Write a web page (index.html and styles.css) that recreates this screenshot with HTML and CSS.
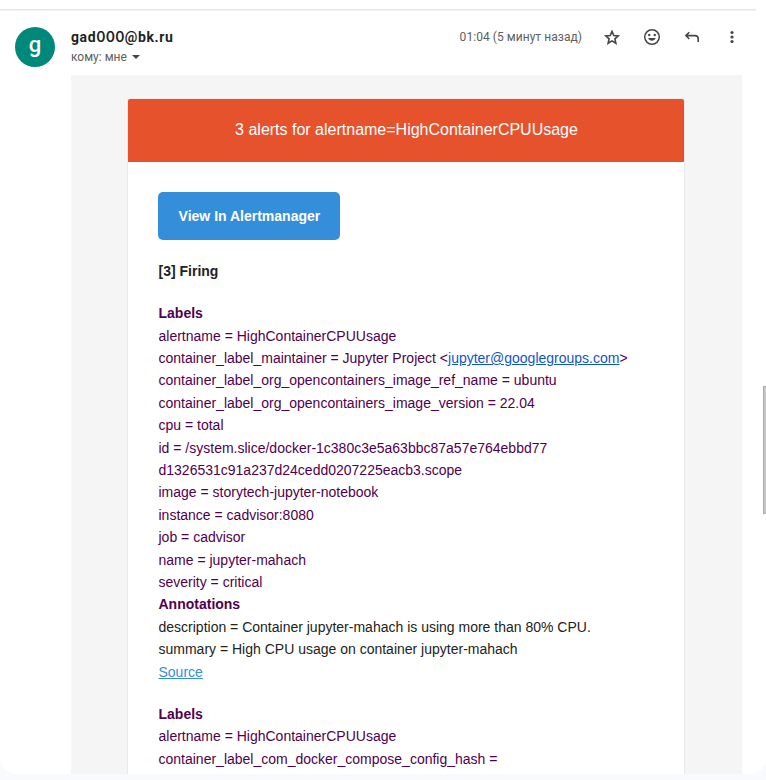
FILE: index.html
```
<!DOCTYPE html>
<html lang="ru">
<head>
<meta charset="utf-8">
<title>gad000@bk.ru</title>
<link rel="stylesheet" href="styles.css">
</head>
<body>
<main class="panel">
  <div class="toolbar-edge"></div>
  <header class="message-header">
    <div class="avatar">g</div>
    <div class="sender">
      <div class="sender-name">gad<span class="digits">000</span>@bk.ru</div>
      <div class="recipient"><span class="recipient-text">кому: мне</span><span class="caret"></span></div>
    </div>
    <div class="actions">
      <span class="date">01:04 (5 минут назад)</span>
      <svg class="icon" viewBox="0 0 20 20"><path class="stroke" d="M10 4.400 11.800 8.500l4.400.4-3.300 3 1 4.400L10 13.900l-3.900 2.400 1-4.400-3.300-3L8.200 8.500z"/></svg>
      <svg class="icon" viewBox="0 0 20 20"><path fill-rule="evenodd" d="M10 2a8 8 0 1 0 0 16 8 8 0 0 0 0-16zm0 1.5a6.5 6.5 0 1 1 0 13 6.5 6.5 0 0 1 0-13z"/><circle cx="7.25" cy="8" r="1.2"/><circle cx="12.75" cy="8" r="1.2"/><path d="M6.2 11h7.6a4 4 0 0 1-7.6 0z"/></svg>
      <svg class="icon" viewBox="0 0 20 20"><path class="stroke" d="M7.3 5.200 3.900 8.600l3.400 3.400M4 8.600h9a3.200 3.200 0 0 1 3.200 3.200V15"/></svg>
      <svg class="icon" viewBox="0 0 20 20"><circle cx="10" cy="5.5" r="1.6"/><circle cx="10" cy="10" r="1.6"/><circle cx="10" cy="14.5" r="1.6"/></svg>
    </div>
  </header>
  <section class="mail-body">
    <article class="card">
      <h1 class="alert-title">3 alerts for alertname=HighContainerCPUUsage</h1>
      <div class="content">
        <a class="button">View In Alertmanager</a>
        <div class="block firing"><strong>[3] Firing</strong></div>
        <div class="block labels">
          <strong>Labels</strong><br>
          alertname = HighContainerCPUUsage<br>
          container_label_maintainer = Jupyter Project &lt;<a class="mail-link">jupyter@googlegroups.com</a>&gt;<br>
          container_label_org_opencontainers_image_ref_name = ubuntu<br>
          container_label_org_opencontainers_image_version = 22.04<br>
          cpu = total<br>
          id = /system.slice/docker-1c380c3e5a63bbc87a57e764ebbd77<br>d1326531c91a237d24cedd0207225eacb3.scope<br>
          image = storytech-jupyter-notebook<br>
          instance = cadvisor:8080<br>
          job = cadvisor<br>
          name = jupyter-mahach<br>
          severity = critical<br>
          <strong>Annotations</strong><br>
          <span class="plain">description = Container jupyter-mahach is using more than 80% CPU.<br>
          summary = High CPU usage on container jupyter-mahach</span><br>
          <a class="source">Source</a>
        </div>
        <div class="block labels">
          <strong>Labels</strong><br>
          alertname = HighContainerCPUUsage<br>
          container_label_com_docker_compose_config_hash =
        </div>
      </div>
    </article>
  </section>
</main>
<div class="scroll-thumb"></div>
</body>
</html>
```
FILE: styles.css
```
* { box-sizing: border-box; }
body {
  margin: 0;
  height: 780px;
  overflow: hidden;
  background: #f8fafe;
  font-family: Roboto, "Liberation Sans", sans-serif;
}
.panel {
  height: 774px;
  overflow: hidden;
  background: #fff;
  border-radius: 0 0 16px 16px;
}
.toolbar-edge {
  width: 756px;
  height: 11px;
  border-bottom: 1px solid #f4f4f4;
  box-shadow: inset 0 -1px #e6e6e6;
}
.message-header {
  display: flex;
  height: 64px;
  padding: 16px 24px 0 15px;
}
.avatar {
  width: 40px;
  height: 40px;
  border-radius: 50%;
  background: #00897b;
  color: #fff;
  font-size: 22px;
  font-weight: 500;
  line-height: 36px;
  text-align: center;
}
.sender { margin-left: 16px; }
.sender-name {
  font-size: 14px;
  font-weight: 700;
  letter-spacing: .6px;
  line-height: 20px;
  color: #1f1f1f;
}
.digits {
  font-family: Inter, sans-serif;
  font-weight: 600;
  letter-spacing: .3px;
}
.recipient {
  display: flex;
  align-items: center;
  font-size: 12px;
  line-height: 20px;
  color: #5e5e5e;
}
.caret {
  margin-left: 5px;
  border: 4px solid transparent;
  border-top-color: #444746;
  border-bottom: 0;
}
.actions {
  display: flex;
  align-items: center;
  height: 20px;
  gap: 20px;
  margin-left: auto;
}
.date {
  font-size: 12px;
  letter-spacing: .05px;
  color: #5e5e5e;
}
.icon {
  width: 20px;
  height: 20px;
  fill: #444746;
}
.stroke { fill: none; stroke: #444746; stroke-width: 1.6; }
.mail-body {
  height: 699px;
  margin: 0 24px 0 71px;
  padding: 23px 57px 0 56px;
  background: #f5f5f5;
}
.card {
  height: 720px;
  overflow: hidden;
  border: 1px solid #e9e9e9;
  border-radius: 3px;
  background: #fff;
  font-family: "Liberation Sans", Arial, sans-serif;
  font-size: 14px;
  line-height: 22.4px;
  color: #222;
}
.alert-title {
  height: 63px;
  margin: 0;
  padding-left: 1px;
  background: #e6522c;
  color: #fff;
  font-size: 16px;
  font-weight: 400;
  line-height: 62px;
  text-align: center;
}
.content { padding: 30px; }
.button {
  display: block;
  width: 182px;
  height: 48px;
  margin-bottom: 19.8px;
  padding-left: .8px;
  border-radius: 5px;
  background: #348eda;
  color: #fff;
  font-weight: 700;
  line-height: 48px;
  text-align: center;
}
.block { padding-left: .5px; margin-bottom: 20px; white-space: nowrap; }
.labels { margin-bottom: 19.8px; color: #500050; }
.plain { color: #222; }
.mail-link { color: #1155cc; text-decoration: underline; }
.source { color: #348eda; text-decoration: underline; }
.scroll-thumb {
  position: absolute;
  top: 386px;
  right: 0;
  width: 3px;
  height: 128px;
  border: 1px solid #aaa;
  border-right: 0;
  background: #c8c8c8;
}
```
